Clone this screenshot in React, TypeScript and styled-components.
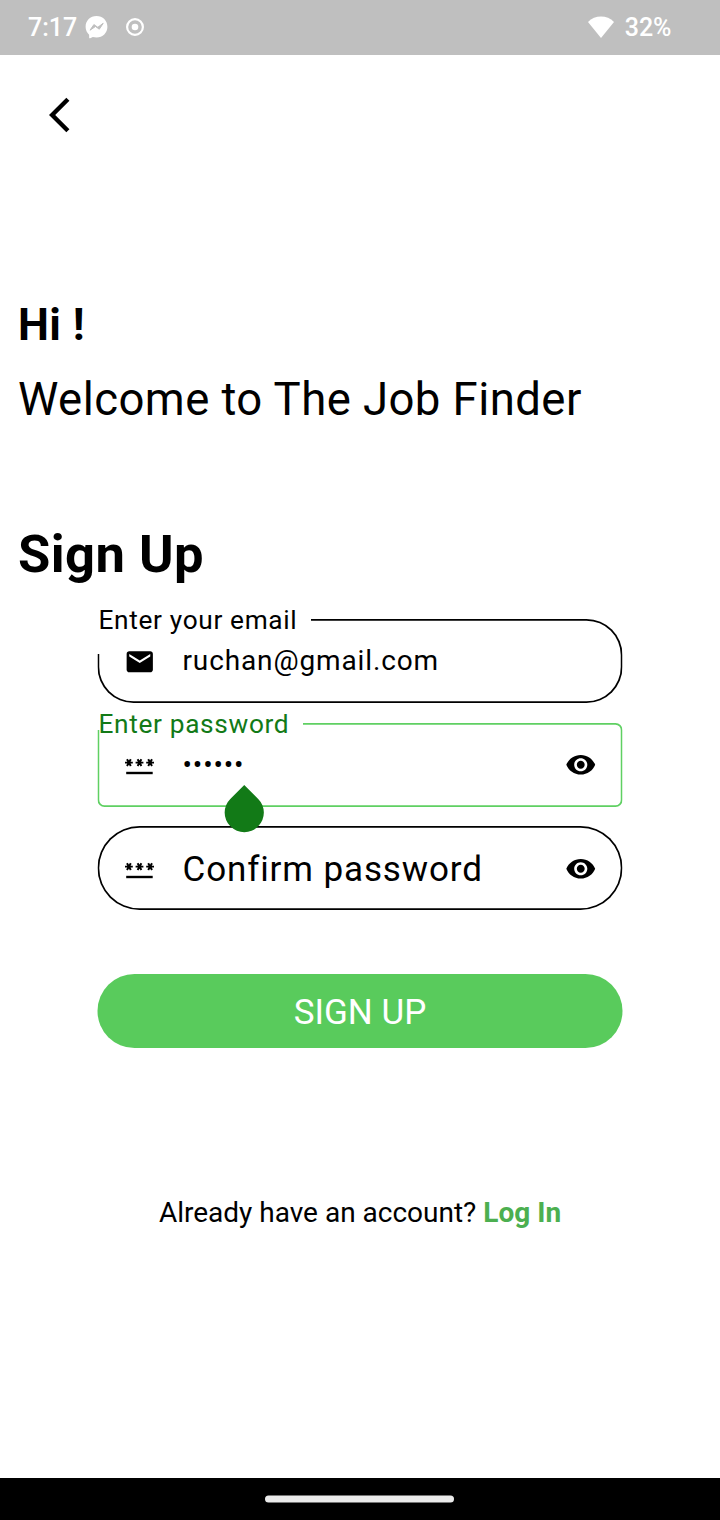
import React from 'react';
import styled, { createGlobalStyle } from 'styled-components';
import { MdEmail, MdRemoveRedEye } from 'react-icons/md';

const GlobalStyle = createGlobalStyle`
  *, *::before, *::after { box-sizing: border-box; }
  body { margin: 0; background: #fff; }
  svg { display: block; }
`;

const Screen = styled.div`
  display: flex;
  flex-direction: column;
  width: 720px;
  height: 1520px;
  overflow: hidden;
  background: #fff;
  color: #000;
  font-family: Roboto, 'Liberation Sans', sans-serif;
`;

const StatusBar = styled.header`
  display: flex;
  align-items: center;
  justify-content: space-between;
  height: 55px;
  padding: 0 48.5px 0 28px;
  background: #bfbfbf;
  color: #fff;
  font-size: 25px;
  font-weight: 500;
  line-height: 55px;
`;

const StatusGroup = styled.div<{ $gap: number }>`
  display: flex;
  align-items: center;
  gap: ${({ $gap }) => $gap}px;
`;

const StatusIcons = styled.div`
  display: flex;
  align-items: center;
  gap: 17px;
  height: 54px;
  margin-top: -1px;
`;

const TopBar = styled.nav`
  height: 243px;
  padding: 39px 0 0 49px;
`;

const BackButton = styled.button`
  display: block;
  padding: 0;
  border: 0;
  background: none;
  color: inherit;
`;

const Main = styled.main`
  display: flex;
  flex-direction: column;
  flex: 1;
`;

const Greeting = styled.h1`
  margin: 0 18px 21px;
  font-size: 43.75px;
  font-weight: 700;
  line-height: 54px;
  letter-spacing: 0.4375px;
`;

const Welcome = styled.p`
  margin: 0 18px;
  font-size: 45.5px;
  line-height: 54px;
  letter-spacing: 0.4375px;
`;

const Title = styled.h2`
  margin: 96px 18px 0;
  font-size: 52.5px;
  font-weight: 700;
  line-height: 62px;
  letter-spacing: 0.4375px;
`;

const Form = styled.form`
  display: flex;
  flex-direction: column;
  width: 525px;
  margin: 34px 0 0 97px;
`;

const FieldBox = styled.div<{ $mb: number; $drop: number }>`
  position: relative;
  display: flex;
  align-items: center;
  height: 84px;
  padding: ${({ $drop }) => $drop}px 26px 0 27px;
  margin-bottom: ${({ $mb }) => $mb}px;
`;

const Outline = styled.span<{ $radius: number; $color: string; $notchX: number; $notchY: number }>`
  position: absolute;
  inset: 0;
  border-radius: ${({ $radius }) => $radius}px;
  box-shadow: inset 0 0 0 1.75px ${({ $color }) => $color};
  clip-path: ${({ $notchX: x, $notchY: y }) =>
    `polygon(${x}px -1px, 101% -1px, 101% 101%, -1px 101%, -1px ${y}px, ${x}px ${y}px)`};
  transform: translateX(0.5px);
`;

const FloatingLabel = styled.label<{ $color: string }>`
  position: absolute;
  left: 1.5px;
  top: -14px;
  color: ${({ $color }) => $color};
  font-size: 26.25px;
  line-height: 31px;
  letter-spacing: 0.656px;
  white-space: nowrap;
`;

const Value = styled.span<{ $size: number; $nudge: number }>`
  flex: 1;
  margin: ${({ $nudge }) => $nudge}px 0 0 27px;
  font-size: ${({ $size }) => $size}px;
  line-height: 42px;
  letter-spacing: 0.875px;
  white-space: nowrap;
`;

const EyeIcon = styled(MdRemoveRedEye)<{ $lift: number }>`
  margin-top: -${({ $lift }) => $lift}px;
`;

const CaretHandle = styled.span`
  position: absolute;
  z-index: 1;
  left: 128px;
  top: 69.5px;
  width: 38.5px;
  height: 38.5px;
  border-radius: 0 50% 50% 50%;
  background: #127a17;
  transform: rotate(45deg);
`;

const SubmitButton = styled.button`
  height: 74px;
  margin-top: 64px;
  padding: 3px 0 0;
  border: 0;
  border-radius: 37px;
  background: #59cb5c;
  color: #fff;
  font: 400 35px/71px Roboto, 'Liberation Sans', sans-serif;
  transform: translateX(0.5px);
`;

const LoginPrompt = styled.p`
  margin: 148px 0 0;
  text-align: center;
  font-size: 28px;
  line-height: 34px;
`;

const LoginLink = styled.a`
  color: #4caf50;
  font-weight: 700;
`;

const NavigationBar = styled.footer`
  display: flex;
  align-items: center;
  justify-content: center;
  height: 42px;
  padding: 0 1px 1px 0;
  background: #000;
`;

const HomePill = styled.span`
  width: 189px;
  height: 7px;
  border-radius: 4px;
  background: #ebebeb;
  transform: translateY(0.5px);
`;

/* Three asterisks over an underline. */
const PasswordIcon = () => (
  <svg width="31.5" height="31.5" viewBox="0 0 31.5 31.5" fill="none" stroke="currentColor">
    {[4.9, 15.500, 26.100].map((x) => (
      <path
        key={x}
        strokeWidth="1.950"
        d={`M${x - 3.900} 13.600h7.800M${x - 1.900} 10.300l3.800 6.600M${x + 1.900} 10.300l-3.800 6.600`}
      />
    ))}
    <path strokeWidth="2.400" d="M2.200 24h26.500" />
  </svg>
);

interface FieldProps {
  icon: React.ReactNode;
  value: string;
  valueSize?: number;
  valueNudge?: number;
  label?: string;
  labelColor?: string;
  outline: string;
  radius: number;
  notchX?: number;
  notchY?: number;
  drop?: number;
  gapAfter?: number;
  secret?: boolean;
  eyeLift?: number;
  children?: React.ReactNode;
}

const Field = ({
  icon,
  value,
  valueSize = 28,
  valueNudge = 0,
  label,
  labelColor = '#000',
  outline,
  radius,
  notchX = 0,
  notchY = 0,
  drop = 2,
  gapAfter = 0,
  secret,
  eyeLift = 0,
  children,
}: FieldProps) => (
  <FieldBox $mb={gapAfter} $drop={drop}>
    <Outline $radius={radius} $color={outline} $notchX={notchX} $notchY={notchY} />
    {label && <FloatingLabel $color={labelColor}>{label}</FloatingLabel>}
    {icon}
    <Value $size={valueSize} $nudge={valueNudge}>
      {value}
    </Value>
    {secret && <EyeIcon size={31.5} $lift={eyeLift} />}
    {children}
  </FieldBox>
);

export default function App() {
  return (
    <Screen>
      <GlobalStyle />
      <StatusBar>
        <StatusGroup $gap={8}>
          <span>7:17</span>
          <StatusIcons>
            <svg width="23" height="24" viewBox="0 0 23 24">
              <path
                fill="#fff"
                d="M11.5 1C5.2 1 .6 5.6.6 11.8c0 3.2 1.3 6 3.5 7.9l.1 3c0 .5.5.8 1 .6l2.6-1.3c1.2.3 2.4.5 3.7.5 6.3 0 10.9-4.6 10.9-10.7S17.800 1 11.500 1z"
              />
              <path
                fill="#bfbfbf"
                stroke="#bfbfbf"
                strokeWidth="1"
                strokeLinejoin="round"
                d="M5 15.200l3.900-5.600 3.900 2.700 5.400-4-3.900 5.900-3.800-2.700z"
              />
            </svg>
            <svg width="20" height="20" viewBox="0 0 20 20">
              <circle cx="10" cy="10" r="7.900" fill="none" stroke="#fff" strokeWidth="2.200" />
              <circle cx="10" cy="10" r="3.300" fill="#fff" />
            </svg>
          </StatusIcons>
        </StatusGroup>
        <StatusGroup $gap={11}>
          <svg width="26" height="24" viewBox="0 0 26 24">
            <path fill="#fff" d="M0 6C7 -1.200 19 -1.200 26 6L13 22z" />
          </svg>
          <span>32%</span>
        </StatusGroup>
      </StatusBar>
      <TopBar>
        <BackButton aria-label="Back">
          <svg width="42" height="42" viewBox="0 0 24 24" fill="currentColor">
            <path d="M11.670 3.870L9.900 2.100 0 12l9.900 9.900 1.770-1.770L3.540 12z" />
          </svg>
        </BackButton>
      </TopBar>
      <Main>
        <Greeting>Hi !</Greeting>
        <Welcome>Welcome to The Job Finder</Welcome>
        <Title>Sign Up</Title>
        <Form>
          <Field
            icon={<MdEmail size={31.5} />}
            label="Enter your email"
            value="ruchan@gmail.com"
            valueNudge={-2}
            outline="#000"
            radius={36}
            notchX={213.5}
            notchY={35}
            gapAfter={20}
          />
          <Field
            icon={<PasswordIcon />}
            label="Enter password"
            labelColor="#127a17"
            value="••••••"
            outline="#5fd062"
            radius={7}
            notchX={205.5}
            notchY={7}
            drop={0}
            gapAfter={19}
            secret
          >
            <CaretHandle />
          </Field>
          <Field
            icon={<PasswordIcon />}
            value="Confirm password"
            valueSize={35}
            valueNudge={2}
            outline="#000"
            radius={42}
            secret
            eyeLift={1.5}
          />
          <SubmitButton type="button">SIGN UP</SubmitButton>
        </Form>
        <LoginPrompt>
          Already have an account? <LoginLink>Log In</LoginLink>
        </LoginPrompt>
      </Main>
      <NavigationBar>
        <HomePill />
      </NavigationBar>
    </Screen>
  );
}
